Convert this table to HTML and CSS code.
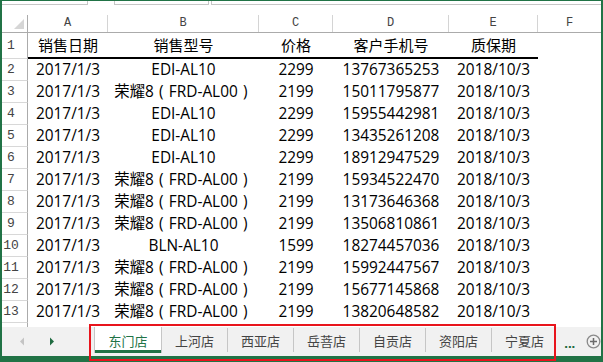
FILE: index.html
```html
<!DOCTYPE html>
<html lang="zh-CN">
<head>
<meta charset="utf-8">
<link rel="stylesheet" href="styles.css">
</head>
<body>
<div class="app">
  <div class="fbar">
    <div class="fb fb1"></div>
    <div class="fb fb2"></div>
    <div class="fb fb3"></div>
  </div>
  <div class="sheet">
    <div class="grid colhead">
      <div class="hc corner"><svg width="10" height="10" viewBox="0 0 10 10"><polygon points="10,0 10,10 0,10" fill="#d6d6d6"/></svg></div>
      <div class="hc">A</div><div class="hc">B</div><div class="hc">C</div><div class="hc">D</div><div class="hc">E</div><div class="hc last">F</div>
    </div>
    <div class="grid row r1">
      <div class="rh">1</div>
      <div class="c th">销售日期</div><div class="c th">销售型号</div><div class="c th">价格</div><div class="c th">客户手机号</div><div class="c th">质保期</div><div class="c"></div>
    </div>
    <div class="grid row"><div class="rh">2</div><div class="c">2017/1/3</div><div class="c">EDI-AL10</div><div class="c">2299</div><div class="c">13767365253</div><div class="c">2018/10/3</div><div class="c"></div></div>
    <div class="grid row"><div class="rh">3</div><div class="c">2017/1/3</div><div class="c">荣耀8<span class="fp">(</span>FRD-AL00<span class="fp">)</span></div><div class="c">2199</div><div class="c">15011795877</div><div class="c">2018/10/3</div><div class="c"></div></div>
    <div class="grid row"><div class="rh">4</div><div class="c">2017/1/3</div><div class="c">EDI-AL10</div><div class="c">2299</div><div class="c">15955442981</div><div class="c">2018/10/3</div><div class="c"></div></div>
    <div class="grid row"><div class="rh">5</div><div class="c">2017/1/3</div><div class="c">EDI-AL10</div><div class="c">2299</div><div class="c">13435261208</div><div class="c">2018/10/3</div><div class="c"></div></div>
    <div class="grid row"><div class="rh">6</div><div class="c">2017/1/3</div><div class="c">EDI-AL10</div><div class="c">2299</div><div class="c">18912947529</div><div class="c">2018/10/3</div><div class="c"></div></div>
    <div class="grid row"><div class="rh">7</div><div class="c">2017/1/3</div><div class="c">荣耀8<span class="fp">(</span>FRD-AL00<span class="fp">)</span></div><div class="c">2199</div><div class="c">15934522470</div><div class="c">2018/10/3</div><div class="c"></div></div>
    <div class="grid row"><div class="rh">8</div><div class="c">2017/1/3</div><div class="c">荣耀8<span class="fp">(</span>FRD-AL00<span class="fp">)</span></div><div class="c">2199</div><div class="c">13173646368</div><div class="c">2018/10/3</div><div class="c"></div></div>
    <div class="grid row"><div class="rh">9</div><div class="c">2017/1/3</div><div class="c">荣耀8<span class="fp">(</span>FRD-AL00<span class="fp">)</span></div><div class="c">2199</div><div class="c">13506810861</div><div class="c">2018/10/3</div><div class="c"></div></div>
    <div class="grid row"><div class="rh">10</div><div class="c">2017/1/3</div><div class="c">BLN-AL10</div><div class="c">1599</div><div class="c">18274457036</div><div class="c">2018/10/3</div><div class="c"></div></div>
    <div class="grid row"><div class="rh">11</div><div class="c">2017/1/3</div><div class="c">荣耀8<span class="fp">(</span>FRD-AL00<span class="fp">)</span></div><div class="c">2199</div><div class="c">15992447567</div><div class="c">2018/10/3</div><div class="c"></div></div>
    <div class="grid row"><div class="rh">12</div><div class="c">2017/1/3</div><div class="c">荣耀8<span class="fp">(</span>FRD-AL00<span class="fp">)</span></div><div class="c">2199</div><div class="c">15677145868</div><div class="c">2018/10/3</div><div class="c"></div></div>
    <div class="grid row"><div class="rh">13</div><div class="c">2017/1/3</div><div class="c">荣耀8<span class="fp">(</span>FRD-AL00<span class="fp">)</span></div><div class="c">2199</div><div class="c">13820648582</div><div class="c">2018/10/3</div><div class="c"></div></div>
    <div class="grid row"><div class="rh"></div><div class="c"></div><div class="c"></div><div class="c"></div><div class="c"></div><div class="c"></div><div class="c"></div></div>
  </div>
  <div class="tabbar">
    <div class="nav">
      <svg width="92" height="29" viewBox="0 0 92 29">
        <polygon points="18,14.5 22,10.5 22,18.5" fill="#c4c4c4"/>
        <polygon points="48,10.5 52,14.5 48,18.5" fill="#1f6b40"/>
      </svg>
    </div>
    <div class="tab active">东门店</div>
    <div class="tab">上河店</div><div class="sep"></div>
    <div class="tab">西亚店</div><div class="sep"></div>
    <div class="tab">岳菩店</div><div class="sep"></div>
    <div class="tab">自贡店</div><div class="sep"></div>
    <div class="tab">资阳店</div><div class="sep"></div>
    <div class="tab">宁夏店</div>
    <div class="more">...</div>
    <div class="add">
      <svg width="15" height="15" viewBox="0 0 15 15">
        <circle cx="7.5" cy="7.5" r="6.3" fill="none" stroke="#8a8a8a" stroke-width="1.3"/>
        <path d="M7.5 4 V11 M4 7.5 H11" stroke="#6a6a6a" stroke-width="1.5"/>
      </svg>
    </div>
  </div>
  <div class="status"></div>
  <div class="mark"></div>
</div>
</body>
</html>
```

FILE: styles.css
```css
* { box-sizing: border-box; }
html, body { margin: 0; padding: 0; }
body {
  width: 603px;
  height: 362px;
  overflow: hidden;
  background: #fff;
  font-family: "Open Sans", "Noto Sans CJK SC", sans-serif;
  color: #000;
}
.app {
  position: relative;
  width: 603px;
  height: 362px;
  border-top: 1px solid #217346;
  border-left: 2px solid #217346;
  border-right: 2px solid #217346;
  display: flex;
  flex-direction: column;
}
.fbar {
  height: 14px;
  flex: none;
  display: flex;
  align-items: flex-start;
}
.fb { height: 4px; border-bottom: 1px solid #c6c6c6; }
.fb1 { width: 86px; border-right: 1px solid #c6c6c6; }
.fb2 { width: 95px; margin-left: 26px; border-left: 1px solid #c6c6c6; border-right: 1px solid #c6c6c6; }
.fb3 { flex: 1; margin-left: 2px; border-left: 1px solid #c6c6c6; }

.sheet {
  flex: 1;
  min-height: 0;
  overflow: hidden;
}
.grid {
  display: grid;
  grid-template-columns: 26px 80px 151px 74px 116px 89px 1fr;
}
.colhead {
  height: 18px;
  border-bottom: 1px solid #ababab;
}
.hc {
  border-right: 1px solid #d4d4d4;
  font-family: "Liberation Mono", monospace;
  font-size: 12px;
  color: #444;
  text-align: center;
  line-height: 17px;
}
.hc.last { border-right: none; }
.corner {
  display: flex;
  align-items: flex-end;
  justify-content: flex-end;
  padding: 0 3px 3px 0;
  border-right-color: #ababab;
}
.corner svg { display: block; }
.row { height: 22px; }
.row.r1 { height: 26px; }
.rh {
  border-right: 1px solid #ababab;
  border-bottom: 1px solid #d8d8d8;
  font-family: "Liberation Mono", monospace;
  font-size: 13px;
  color: #444;
  text-align: center;
  padding-right: 7px;
  display: flex;
  align-items: center;
  justify-content: center;
}
.c {
  font-size: 15.4px;
  text-align: center;
  line-height: 22px;
  white-space: nowrap;
  overflow: hidden;
}
.fp {
  display: inline-block;
  width: 15px;
  text-align: center;
}
.r1 .c { line-height: 22px; padding-top: 1px; }
.r1 .th { border-bottom: 2px solid #000; font-size: 15px; }

.tabbar {
  height: 29px;
  flex: none;
  background: #f1f1f1;
  display: flex;
  align-items: stretch;
  font-family: "Noto Sans CJK SC", sans-serif;
  font-size: 13px;
  color: #444;
}
.nav { width: 92px; flex: none; }
.nav svg { display: block; }
.tab {
  width: 65px;
  flex: none;
  display: flex;
  align-items: center;
  justify-content: center;
  padding-bottom: 2px;
}
.tab.active {
  width: 68px;
  background: #fff;
  color: #217346;
  border-left: 1px solid #c6c6c6;
  border-right: 1px solid #c6c6c6;
  height: 26px;
  box-shadow: inset 0 -3px 0 #217346;
  padding-bottom: 0;
  padding-top: 1px;
}
.sep {
  width: 1px;
  flex: none;
  background: #c6c6c6;
  margin: 1px 0 4px;
}
.more {
  margin-left: 7px;
  width: 14px;
  color: #1f6b40;
  font-family: "DejaVu Sans", sans-serif;
  font-weight: bold;
  font-size: 11px;
  display: flex;
  align-items: center;
  padding-top: 5px;
  letter-spacing: -0.5px;
}
.add {
  margin-left: auto;
  margin-right: 0;
  display: flex;
  align-items: center;
  padding-bottom: 1px;
}
.add svg { display: block; }
.status {
  height: 6px;
  flex: none;
  background: #217346;
}
.mark {
  position: absolute;
  left: 87px;
  top: 323px;
  width: 467px;
  height: 37px;
  border: 2px solid #e8141c;
}
```
